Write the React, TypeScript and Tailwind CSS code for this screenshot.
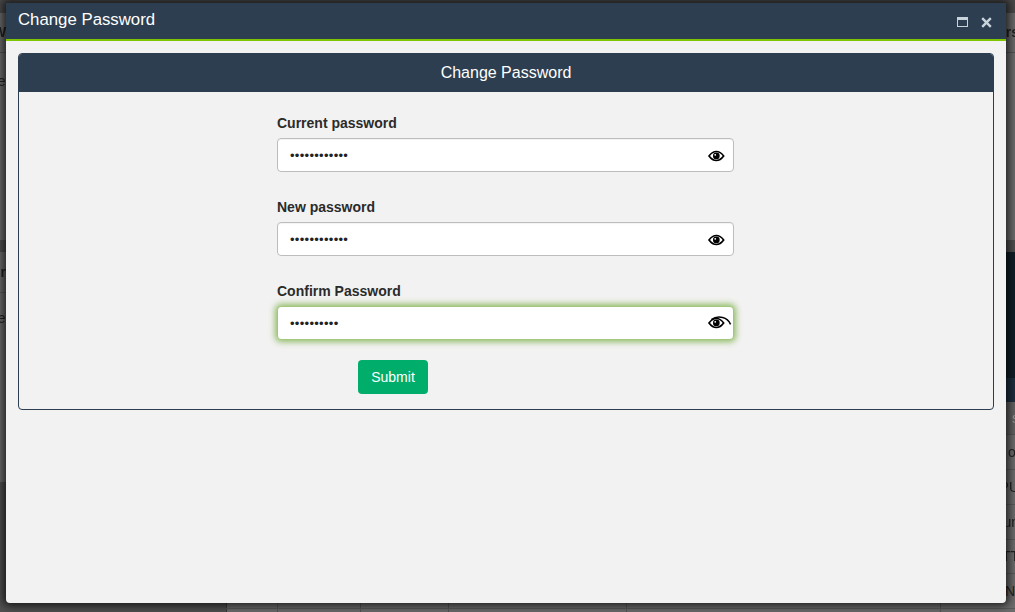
const SANS = "font-['Liberation_Sans',Arial,sans-serif]"

function EyeIcon({ focused }: { focused?: boolean }) {
  return (
    <svg width="24" height="16" viewBox="0 0 28.8 19.2" fill="none" className="block">
      <path d="M1.2 8.4C4 4.6 7.4 3 10 3s6 1.6 8.8 5.4C16 12.2 12.6 13.8 10 13.8S4 12.2 1.2 8.4Z" stroke="#000" strokeWidth="2" />
      <circle cx="10" cy="8.3" r="4" fill="#000" />
      <circle cx="8.7" cy="7" r="1.1" fill="#fff" />
      {focused && (
        <path d="M4 4.4C8 1.4 13 .8 17.5 1.8c4.4 1 7.6 3.6 9.6 8.2" stroke="#000" strokeWidth="1.8" />
      )}
    </svg>
  )
}

function PasswordField({ label, length, focused }: { label: string; length: number; focused?: boolean }) {
  return (
    <div className="mb-[25px]">
      <label className="mb-[5px] block h-5 text-[14px] font-bold leading-5 text-[#2b2b2b]">{label}</label>
      <div
        className={
          focused
            ? 'flex h-[34px] items-center rounded border border-[#a3c77c] bg-white pl-3 pr-[7px] shadow-[0_0_6px_2px_#8fbb64]'
            : 'flex h-[34px] items-center rounded border border-[#bdbdbd] bg-white pl-3 pr-[7px] shadow-[inset_0_1px_1px_rgba(0,0,0,0.05)]'
        }
      >
        <span className="flex-1 text-[13px] leading-none tracking-[0.3px] text-[#222]">{'•'.repeat(length)}</span>
        <span className={focused ? '-mr-[6px] mt-[2px]' : '-mr-[6px] mt-[3px]'}>
          <EyeIcon focused={focused} />
        </span>
      </div>
    </div>
  )
}

function BackdropRow({ left, right, leftClass, className }: { left?: string; right?: string; leftClass?: string; className: string }) {
  return (
    <div className={`flex shrink-0 items-center justify-between overflow-hidden text-[14px] text-[#222] ${className}`}>
      <span className={`blur-[0.4px] ${leftClass ?? ''}`}>{left}</span>
      <span className="-mr-1 blur-[0.4px]">{right}</span>
    </div>
  )
}

// table columns that show under the dialog's bottom edge
function ColumnCells({ last, className }: { last?: string; className: string }) {
  return (
    <div className={`flex shrink-0 text-[14px] text-[#222] ${className}`}>
      <div className="w-[51px] border-l border-[#3a3a3a]" />
      <div className="w-[83px] border-l border-[#555]" />
      <div className="w-[88px] border-l border-[#555]" />
      <div className="w-[178px] border-l border-[#555]" />
      <div className="w-[314px] border-l border-[#555]" />
      <div className="flex flex-1 items-center justify-end overflow-hidden border-l border-[#555]">{last}</div>
    </div>
  )
}

export default function App() {
  return (
    <div className={`relative h-[612px] w-[1015px] overflow-hidden bg-[#6c6c6c] ${SANS}`}>
      {/* dimmed page behind the dialog */}
      <div className="flex h-full flex-col">
        <div className="h-[13px] shrink-0 bg-[#4a4a4a]" />
        <BackdropRow left="W" right="rs" leftClass="-ml-[7px]" className="h-10 border-b border-[#525252] bg-[#6a6a6a] font-bold" />
        <BackdropRow left="pe" leftClass="-ml-[10px]" className="h-[187px] items-start bg-[#6c6c6c] pt-[18px]" />
        <div className="h-[12px] shrink-0 bg-[#4f4f4f]" />
        <div className="flex h-[150px] shrink-0">
          <div className="w-[60px]">
            <BackdropRow left="or" leftClass="-ml-2" className="h-[41px] border-b border-[#585858] font-bold" />
            <BackdropRow left="pe" leftClass="-ml-[10px]" className="h-[50px]" />
          </div>
          <div className="flex-1" />
          <div className="flex w-[40px] flex-col">
            <div className="h-[126px] bg-[#111e27] pt-[23px] text-[10px] tracking-[2px] text-[#aaa]">------</div>
            <div className="h-[24px] bg-[#1d2f40]" />
          </div>
        </div>
        <div className="flex h-[210px] shrink-0">
          <div className="flex w-[226px] flex-col">
            <div className="h-[80px] bg-[#6c6c6c]" />
            <div className="flex-1 bg-[#505050]" />
          </div>
          <div className="flex flex-1 flex-col">
            <BackdropRow right="s" className="h-[33px] border-b border-[#555] bg-[#626262] text-[#999]" />
            <BackdropRow right="ol" className="h-[35px] border-b border-[#5a5a5a]" />
            <BackdropRow right="PU" className="h-[35px] border-b border-[#5a5a5a]" />
            <BackdropRow right="un" className="h-[35px] border-b border-[#5a5a5a]" />
            <BackdropRow right="TT" className="h-[34px] border-b border-[#5a5a5a]" />
            <ColumnCells last="N" className="h-[35px] border-b border-[#595959]" />
            <ColumnCells className="h-[3px]" />
          </div>
        </div>
      </div>

      {/* dialog */}
      <div className="absolute left-[6px] top-[3px] flex h-[600px] w-[1000px] flex-col overflow-hidden rounded-b bg-[#f2f2f2] shadow-[0_0_8px_3px_rgba(0,0,0,0.7)]">
        <div className="flex h-[38px] items-center justify-between border-b-2 border-[#7fc400] bg-[#2c3e50] pb-0.5 pl-3 pr-3.5">
          <span className="text-[16.8px] text-white">Change Password</span>
          <div className="flex items-center gap-[13px] text-[#c9d3dc]">
            <svg width="11" height="10" viewBox="0 0 11 10" fill="none" className="mt-1">
              <rect x=".5" y=".5" width="10" height="9" stroke="currentColor" />
              <rect x="1" y="1" width="9" height="2" fill="currentColor" />
            </svg>
            <svg width="11" height="11" viewBox="0 0 11 11" fill="none" className="mt-1">
              <path d="M1.2 1.2l8.6 8.6M9.8 1.2L1.2 9.8" stroke="currentColor" strokeWidth="2.4" />
            </svg>
          </div>
        </div>

        <div className="px-3 pt-3">
          <div className="h-[357px] overflow-hidden rounded border border-[#2c3e50]">
            <div className="flex h-[38px] items-center justify-center bg-[#2c3e50] text-[16px] text-white">Change Password</div>
            <div className="ml-[258px] w-[457px] pt-[21px]">
              <PasswordField label="Current password" length={12} />
              <PasswordField label="New password" length={12} />
              <PasswordField label="Confirm Password" length={10} focused />
              <button className="-mt-[5px] ml-[81px] block h-[34px] w-[70px] rounded bg-[#00ad6b] text-[14px] text-white">Submit</button>
            </div>
          </div>
        </div>
      </div>
    </div>
  )
}
